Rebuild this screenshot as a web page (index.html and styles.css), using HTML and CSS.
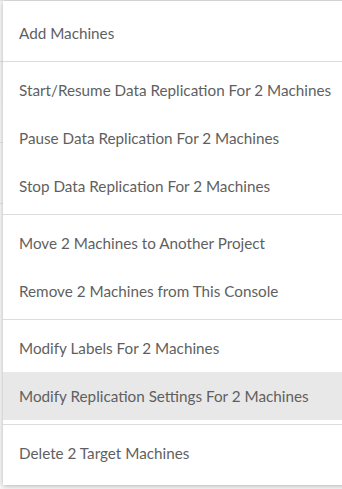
FILE: index.html
```html
<!DOCTYPE html>
<html lang="en">
<head>
  <meta charset="UTF-8">
  <title>Machine Actions</title>
  <link rel="stylesheet" href="styles.css">
</head>
<body>

<div class="page">
  <div class="behind">
    <div class="behind-row"></div>
    <div class="behind-row"><span class="cut">l</span></div>
    <div class="behind-row"></div>
  </div>

  <ul class="menu">
    <li class="section">
      <a class="item">Add Machines</a>
    </li>
    <li class="section">
      <a class="item">Start/Resume Data Replication For 2 Machines</a>
      <a class="item">Pause Data Replication For 2 Machines</a>
      <a class="item">Stop Data Replication For 2 Machines</a>
    </li>
    <li class="section">
      <a class="item">Move 2 Machines to Another Project</a>
      <a class="item">Remove 2 Machines from This Console</a>
    </li>
    <li class="section">
      <a class="item">Modify Labels For 2 Machines</a>
      <a class="item active">Modify Replication Settings For 2 Machines</a>
    </li>
    <li class="section">
      <a class="item">Delete 2 Target Machines</a>
    </li>
  </ul>
</div>

</body>
</html>
```

FILE: styles.css
```css
html, body {
  margin: 0;
  padding: 0;
}
body {
  font-family: Lato, "Open Sans", Arial, sans-serif;
  background: #f7f7f7;
  overflow: hidden;
  width: 342px;
  height: 489px;
}
.page {
  position: relative;
  height: 489px;
  border-top: 1px solid #e4e4e4;
  box-sizing: border-box;
}
.behind {
  position: absolute;
  left: 0;
  top: 0;
  width: 10px;
}
.behind-row {
  height: 60px;
  border-bottom: 1px solid #e2e2e2;
  font-size: 15px;
  color: #444;
}
.behind-row .cut {
  display: block;
  margin: 20px 0 0 -3px;
}
.menu {
  position: absolute;
  left: 3px;
  top: 0;
  width: 380px;
  list-style: none;
  margin: 0;
  padding: 4px 0;
  background: #fff;
  box-shadow: 0 1px 5px rgba(0,0,0,0.28);
}
.section {
  padding: 4px 0;
  border-bottom: 1px solid #dcdcdc;
}
.section:last-child {
  border-bottom: none;
}
.item {
  display: block;
  height: 48px;
  line-height: 48px;
  padding: 0 16px;
  font-size: 15.25px;
  color: #5f5f5f;
  white-space: nowrap;
  cursor: pointer;
}
.item.active {
  background: #e8e8e8;
}
```
